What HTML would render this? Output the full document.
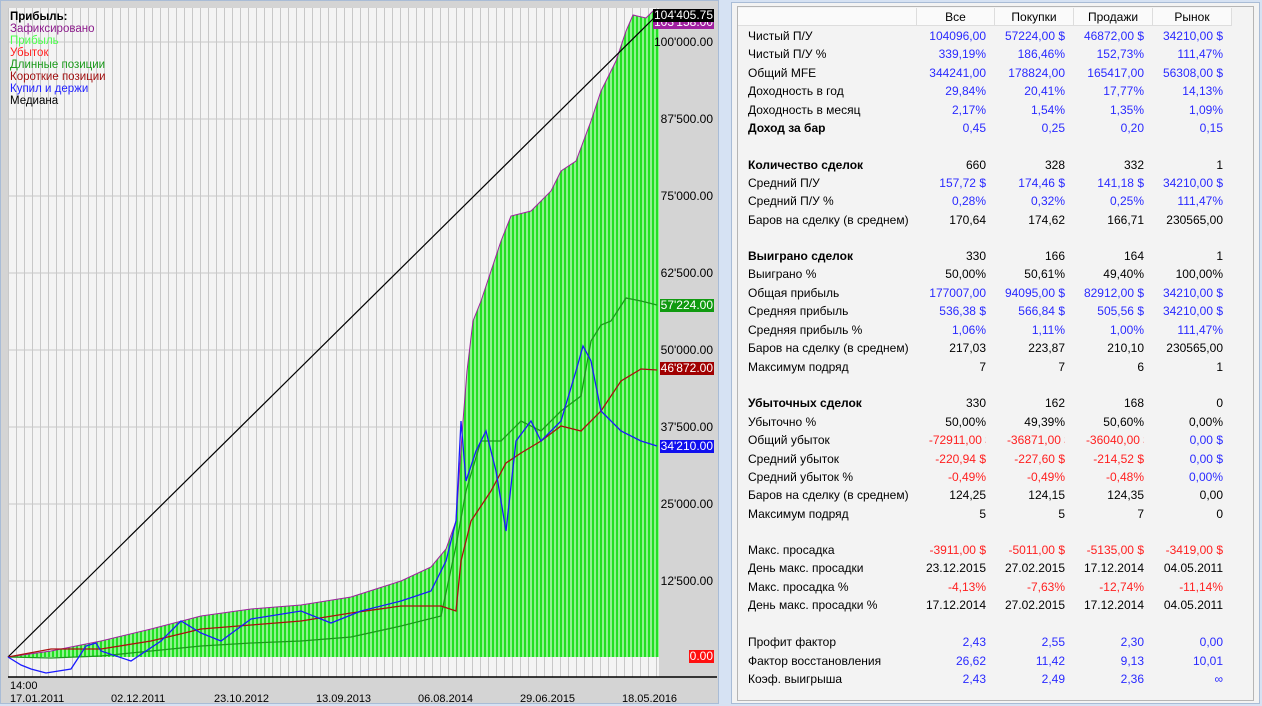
<!DOCTYPE html>
<html><head><meta charset="utf-8">
<style>
body{margin:0;width:1262px;height:706px;background:#d6e2f3;position:relative;overflow:hidden;font-family:"Liberation Sans","DejaVu Sans",sans-serif;font-size:12px}
#chart{position:absolute;left:0;top:0;width:719px;height:704px;background:#d4d4d4;border:1px solid #a9bcd6;box-sizing:border-box}
#panel{position:absolute;left:731px;top:2px;width:529px;height:702px;background:#f3f3f3;border:1px solid #a9bcd6;box-sizing:border-box}
#inner{position:absolute;left:737px;top:6px;width:517px;height:695px;border:1px solid #b5b5b5;box-sizing:border-box}
.r{position:absolute;left:748px;height:16px;line-height:16px;white-space:nowrap}
.v{position:absolute;height:16px;line-height:16px;text-align:right;white-space:nowrap;overflow:hidden;width:76px}
.v span.c{position:absolute;right:-6px;top:0}
.b{color:#2a2aff}.k{color:#000}.rd{color:#ff2020}
.h{position:absolute;top:8px;height:18px;line-height:18px;background:#fafafa;border-right:1px solid #ddd;border-bottom:1px solid #ddd;text-align:center;box-sizing:border-box}
.lab{position:absolute;right:4px;font-size:12px;line-height:13px;padding:0 1px;color:#000}
</style></head><body>
<div id="chart">
<svg width="719" height="704" style="position:absolute;left:0;top:0">
<defs>
<pattern id="vg" x="7" y="0" width="8" height="10" patternUnits="userSpaceOnUse"><rect width="8" height="10" fill="#f4f4f4"/><rect x="0" width="1" height="10" fill="#c8c8c8"/></pattern>
<pattern id="gb" x="7" y="0" width="4" height="10" patternUnits="userSpaceOnUse"><rect width="4" height="10" fill="#22e022"/><rect x="2" width="2" height="10" fill="#8ef38e"/></pattern>
</defs>
<rect x="7" y="7" width="651" height="669" fill="url(#vg)"/>
<g stroke="#c8c8c8" stroke-width="1">
<line x1="7" y1="41" x2="658" y2="41"/><line x1="7" y1="118" x2="658" y2="118"/><line x1="7" y1="195" x2="658" y2="195"/><line x1="7" y1="272" x2="658" y2="272"/><line x1="7" y1="349" x2="658" y2="349"/><line x1="7" y1="426" x2="658" y2="426"/><line x1="7" y1="503" x2="658" y2="503"/><line x1="7" y1="580" x2="658" y2="580"/>
</g>
<polygon fill="url(#gb)" points="7,656 50,650 100,640 150,628 200,615 250,608 300,604 350,596 400,580 430,566 445,548 455,520 462,420 466,370 472,320 480,300 490,270 500,240 510,215 530,210 550,190 560,170 575,160 590,120 600,90 615,60 625,30 632,14 645,17 652,10 658,10 658,656"/>
<polyline fill="none" stroke="#a020a0" stroke-width="1" points="7,656 50,650 100,640 150,628 200,615 250,608 300,604 350,596 400,580 430,566 445,548 455,520 462,420 466,370 472,320 480,300 490,270 500,240 510,215 530,210 550,190 560,170 575,160 590,120 600,90 615,60 625,30 632,14 645,17 652,10 658,10"/>
<line x1="7" y1="656" x2="658" y2="12" stroke="#000" stroke-width="1.2"/>
<polyline fill="none" stroke="#1a9a1a" stroke-width="1.3" points="7,656 50,657 100,655 150,650 200,645 250,642 300,640 350,636 400,625 440,615 455,545 465,490 480,440 500,440 520,420 540,430 560,410 580,395 590,340 600,324 610,320 625,297 640,300 656,304"/>
<polyline fill="none" stroke="#aa1010" stroke-width="1.3" points="7,656 50,648 100,648 150,640 200,628 250,624 300,620 350,612 400,605 440,605 455,610 460,560 470,520 490,490 505,462 520,452 540,440 560,425 580,430 600,410 620,380 640,368 656,369"/>
<polyline fill="none" stroke="#1a1aff" stroke-width="1.3" points="7,656 20,664 30,668 45,672 70,668 85,645 95,642 100,650 130,660 160,640 180,620 200,632 220,640 250,618 300,610 330,622 360,610 400,600 430,590 445,560 455,520 460,420 465,480 475,450 485,430 495,470 505,530 515,440 530,420 540,440 560,420 575,370 582,345 590,360 600,410 620,430 640,440 656,445"/>
<line x1="7" y1="676" x2="716" y2="676" stroke="#000" stroke-width="1.5"/>
</svg>
<div style="position:absolute;left:9px;top:10px;line-height:12px;font-size:11.5px">
<b>Прибыль:</b><br><span style="color:#8b1a8b">Зафиксировано</span><br><span style="color:#4cff4c">Прибыль</span><br><span style="color:#ff2020">Убыток</span><br><span style="color:#1a9a1a">Длинные позиции</span><br><span style="color:#a01010">Короткие позиции</span><br><span style="color:#2020ff">Купил и держи</span><br><span>Медиана</span></div>
<div class="lab" style="top:15px;background:#a020a0;color:#fff">103'158.00</div>
<div class="lab" style="top:8px;background:#000;color:#fff">104'405.75</div>
<div class="lab" style="top:35px">100'000.00</div>
<div class="lab" style="top:112px">87'500.00</div>
<div class="lab" style="top:189px">75'000.00</div>
<div class="lab" style="top:266px">62'500.00</div>
<div class="lab" style="top:298px;background:#109a10;color:#fff">57'224.00</div>
<div class="lab" style="top:343px">50'000.00</div>
<div class="lab" style="top:361px;background:#a00000;color:#fff">46'872.00</div>
<div class="lab" style="top:420px">37'500.00</div>
<div class="lab" style="top:439px;background:#1010ee;color:#fff">34'210.00</div>
<div class="lab" style="top:497px">25'000.00</div>
<div class="lab" style="top:574px">12'500.00</div>
<div class="lab" style="top:649px;background:#ff1010;color:#fff">0.00</div>
<div style="position:absolute;left:9px;top:679px;font-size:11px;line-height:13px">14:00</div>
<div style="position:absolute;left:9px;top:692px;font-size:11px;line-height:13px;width:700px">
<span style="position:absolute;left:0">17.01.2011</span><span style="position:absolute;left:101px">02.12.2011</span><span style="position:absolute;left:204px">23.10.2012</span><span style="position:absolute;left:306px">13.09.2013</span><span style="position:absolute;left:408px">06.08.2014</span><span style="position:absolute;left:510px">29.06.2015</span><span style="position:absolute;left:612px">18.05.2016</span></div>
</div>
<div id="panel"></div>
<div id="inner"></div>
<div class="h" style="left:738px;width:179px"></div>
<div class="h" style="left:917px;width:78px">Все</div>
<div class="h" style="left:995px;width:79px">Покупки</div>
<div class="h" style="left:1074px;width:79px">Продажи</div>
<div class="h" style="left:1153px;width:79px">Рынок</div>
<div id="rows"></div>
<script>
var R=[
[28,"Чистый П/У",0,"b","104096,00","57224,00 $","46872,00 $","34210,00 $"],
[46,"Чистый П/У %",0,"b","339,19%","186,46%","152,73%","111,47%"],
[65,"Общий MFE",0,"b","344241,00","178824,00","165417,00","56308,00 $"],
[83,"Доходность в год",0,"b","29,84%","20,41%","17,77%","14,13%"],
[102,"Доходность в месяц",0,"b","2,17%","1,54%","1,35%","1,09%"],
[120,"Доход за бар",1,"b","0,45","0,25","0,20","0,15"],
[157,"Количество сделок",1,"k","660","328","332","1"],
[175,"Средний П/У",0,"b","157,72 $","174,46 $","141,18 $","34210,00 $"],
[193,"Средний П/У %",0,"b","0,28%","0,32%","0,25%","111,47%"],
[212,"Баров на сделку (в среднем)",0,"k","170,64","174,62","166,71","230565,00"],
[248,"Выиграно сделок",1,"k","330","166","164","1"],
[266,"Выиграно %",0,"k","50,00%","50,61%","49,40%","100,00%"],
[285,"Общая прибыль",0,"b","177007,00","94095,00 $","82912,00 $","34210,00 $"],
[303,"Средняя прибыль",0,"b","536,38 $","566,84 $","505,56 $","34210,00 $"],
[322,"Средняя прибыль %",0,"b","1,06%","1,11%","1,00%","111,47%"],
[340,"Баров на сделку (в среднем)",0,"k","217,03","223,87","210,10","230565,00"],
[359,"Максимум подряд",0,"k","7","7","6","1"],
[395,"Убыточных сделок",1,"k","330","162","168","0"],
[414,"Убыточно %",0,"k","50,00%","49,39%","50,60%","0,00%"],
[432,"Общий убыток",0,"rd","-72911,00 $","-36871,00 $","-36040,00 $","0,00 $"],
[451,"Средний убыток",0,"rd","-220,94 $","-227,60 $","-214,52 $","0,00 $"],
[469,"Средний убыток %",0,"rd","-0,49%","-0,49%","-0,48%","0,00%"],
[487,"Баров на сделку (в среднем)",0,"k","124,25","124,15","124,35","0,00"],
[506,"Максимум подряд",0,"k","5","5","7","0"],
[542,"Макс. просадка",0,"rd","-3911,00 $","-5011,00 $","-5135,00 $","-3419,00 $"],
[560,"День макс. просадки",0,"k","23.12.2015","27.02.2015","17.12.2014","04.05.2011"],
[579,"Макс. просадка %",0,"rd","-4,13%","-7,63%","-12,74%","-11,14%"],
[597,"День макс. просадки %",0,"k","17.12.2014","27.02.2015","17.12.2014","04.05.2011"],
[634,"Профит фактор",0,"b","2,43","2,55","2,30","0,00"],
[653,"Фактор восстановления",0,"b","26,62","11,42","9,13","10,01"],
[671,"Коэф. выигрыша",0,"b","2,43","2,49","2,36","∞"]];
var rights=[986,1065,1144,1223],h="";
R.forEach(function(r){
h+='<div class="r" style="top:'+r[0]+'px;'+(r[2]?'font-weight:bold':'')+'">'+r[1]+'</div>';
for(var i=0;i<4;i++){var c=r[3];if(r[3]=="rd"&&i==3&&r[1]!="Макс. просадка %"&&r[1]!="Макс. просадка")c="b";
var txt=r[4+i],w=76,cut=(c=="rd"&&txt.indexOf("$")>0&&txt.length>10);
h+='<div class="v '+c+'" style="top:'+r[0]+'px;left:'+(rights[i]-w)+'px;">'+(cut?'<span class="c">'+txt+'</span>':txt)+'</div>';}
});
document.getElementById("rows").innerHTML=h;
</script>
</body></html>
